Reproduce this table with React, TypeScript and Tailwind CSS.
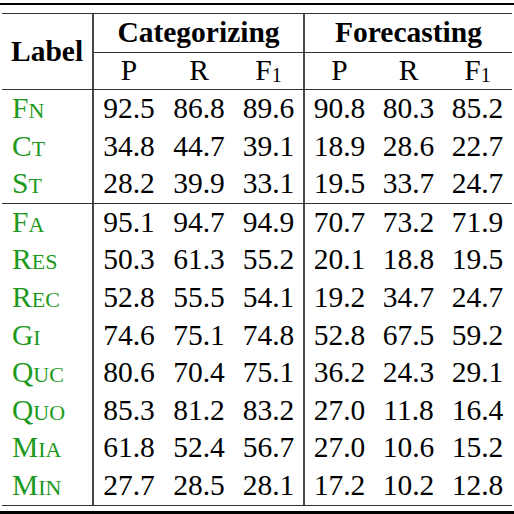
const rowsA = [
  { label: ["F", "N"], v: ["92.5", "86.8", "89.6", "90.8", "80.3", "85.2"] },
  { label: ["C", "T"], v: ["34.8", "44.7", "39.1", "18.9", "28.6", "22.7"] },
  { label: ["S", "T"], v: ["28.2", "39.9", "33.1", "19.5", "33.7", "24.7"] },
];

const rowsB = [
  { label: ["F", "A"], v: ["95.1", "94.7", "94.9", "70.7", "73.2", "71.9"] },
  { label: ["R", "ES"], v: ["50.3", "61.3", "55.2", "20.1", "18.8", "19.5"] },
  { label: ["R", "EC"], v: ["52.8", "55.5", "54.1", "19.2", "34.7", "24.7"] },
  { label: ["G", "I"], v: ["74.6", "75.1", "74.8", "52.8", "67.5", "59.2"] },
  { label: ["Q", "UC"], v: ["80.6", "70.4", "75.1", "36.2", "24.3", "29.1"] },
  { label: ["Q", "UO"], v: ["85.3", "81.2", "83.2", "27.0", "11.8", "16.4"] },
  { label: ["M", "IA"], v: ["61.8", "52.4", "56.7", "27.0", "10.6", "15.2"] },
  { label: ["M", "IN"], v: ["27.7", "28.5", "28.1", "17.2", "10.2", "12.8"] },
];

const VLine = () => <div className="w-[2px] shrink-0 self-stretch bg-[#474747]" />;
const HLine = () => <div className="h-[1px] bg-[#333333]" />;

function Cell({ children }: { children: React.ReactNode }) {
  return (
    <div className="flex w-[70px] shrink-0 items-center justify-center font-['Liberation_Serif']">{children}</div>
  );
}

function FCell({ children }: { children: React.ReactNode }) {
  return <div className="flex flex-1 items-center justify-center font-['Liberation_Serif']">{children}</div>;
}

function Row({ label, v }: { label: string[]; v: string[] }) {
  return (
    <div className="flex h-[37.6px]">
      <div className="flex w-[90px] shrink-0 items-baseline self-center pl-[10px] font-['Liberation_Serif'] text-[#1d9a1d]">
        <span>{label[0]}</span>
        <span className="text-[22px]">{label[1]}</span>
      </div>
      <VLine />
      <Cell>{v[0]}</Cell>
      <Cell>{v[1]}</Cell>
      <div className="flex w-[69px] shrink-0 items-center justify-center font-['Liberation_Serif']">{v[2]}</div>
      <VLine />
      <FCell>{v[3]}</FCell>
      <FCell>{v[4]}</FCell>
      <FCell>{v[5]}</FCell>
    </div>
  );
}

const F1 = () => (
  <span className="flex items-start font-['Liberation_Serif']">
    F<span className="relative top-[9px] text-[20px] leading-none">1</span>
  </span>
);

export default function App() {
  return (
    <div className="h-[514px] w-[514px] overflow-hidden bg-white text-[29.5px] leading-none text-black [font-family:Liberation_Serif]">
      <div className="mt-[3px] h-[2px] bg-black" />
      <div className="mx-[2px] mt-[8px]">
        <HLine />
        <div className="flex">
          <div className="flex h-[75px] w-[90px] shrink-0 items-center pl-[9px] font-['Liberation_Serif'] font-bold">Label</div>
          <VLine />
          <div className="flex flex-1 flex-col">
            <div className="flex h-[38px]">
              <div className="flex w-[209px] shrink-0 items-center justify-center font-['Liberation_Serif'] font-bold">
                Categorizing
              </div>
              <VLine />
              <div className="flex flex-1 items-center justify-center font-['Liberation_Serif'] font-bold">Forecasting</div>
            </div>
            <HLine />
            <div className="flex h-[36px]">
              <Cell>P</Cell>
              <Cell>R</Cell>
              <div className="flex w-[69px] shrink-0 items-center justify-center">
                <F1 />
              </div>
              <VLine />
              <FCell>P</FCell>
              <FCell>R</FCell>
              <FCell>
                <F1 />
              </FCell>
            </div>
          </div>
        </div>
        <HLine />
        {rowsA.map((r) => (
          <Row key={r.label.join("")} {...r} />
        ))}
        <HLine />
        {rowsB.map((r) => (
          <Row key={r.label.join("")} {...r} />
        ))}
        <HLine />
      </div>
      <div className="mt-[5px] h-[3px] bg-black" />
    </div>
  );
}
